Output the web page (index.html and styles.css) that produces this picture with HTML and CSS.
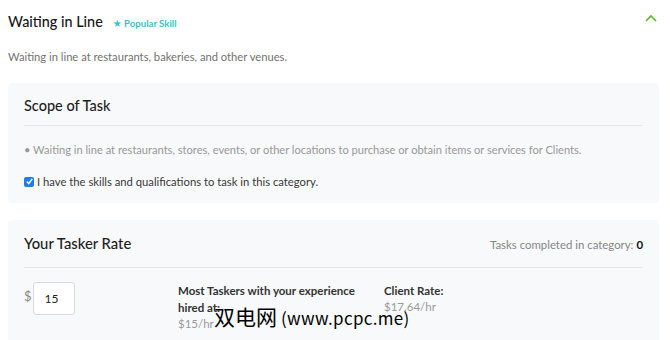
FILE: index.html
```
<!DOCTYPE html>
<html>
<head>
<meta charset="utf-8">
<link rel="stylesheet" href="styles.css">
</head>
<body>
<div class="page">
  <div class="head">
    <div class="title-row">
      <span class="title">Waiting in Line</span>
      <span class="popular"><span class="star">★</span> Popular Skill</span>
    </div>
    <svg class="chev" width="12" height="8" viewBox="0 0 12 8"><path d="M1 7 L6 2 L11 7" fill="none" stroke="#5cb82e" stroke-width="1.6"/></svg>
  </div>
  <p class="desc">Waiting in line at restaurants, bakeries, and other venues.</p>

  <section class="card scope">
    <h2 class="card-title">Scope of Task</h2>
    <div class="sep"></div>
    <p class="bullet">• Waiting in line at restaurants, stores, events, or other locations to purchase or obtain items or services for Clients.</p>
    <label class="check"><span class="box"><svg width="9" height="9" viewBox="0 0 9 9"><path d="M1.8 4.6 L3.7 6.6 L7.3 1.9" fill="none" stroke="#fff" stroke-width="1.5"/></svg></span>I have the skills and qualifications to task in this category.</label>
  </section>

  <section class="card rate">
    <div class="rate-head">
      <h2 class="card-title">Your Tasker Rate</h2>
      <span class="completed">Tasks completed in category: <b>0</b></span>
    </div>
    <div class="sep"></div>
    <div class="rate-body">
      <div class="price">
        <span class="dollar">$</span>
        <span class="input">15</span>
      </div>
      <div class="info most">
        <div class="label">Most Taskers with your experience hired at:</div>
        <div class="val">$15/hr</div>
      </div>
      <div class="info client">
        <div class="label">Client Rate:</div>
        <div class="val">$17.64/hr</div>
      </div>
    </div>
  </section>
  <div class="watermark"><span class="wm-cjk">双电网</span><span class="wm-lat">(www.pcpc.me)</span></div>
</div>
</body>
</html>
```
FILE: styles.css
```
html, body {
  margin: 0;
  padding: 0;
  background: #fff;
}
body {
  font-family: "Lato", "Liberation Sans", sans-serif;
  color: #222;
  overflow: hidden;
}
.page {
  position: relative;
  padding: 0 11px 0 8px;
  width: 651px;
}
.head {
  display: flex;
  justify-content: space-between;
  align-items: center;
  height: 42px;
}
.title-row {
  display: flex;
  align-items: baseline;
  gap: 10px;
}
.title {
  font-size: 14.4px;
  font-weight: 500;
  color: #161616;
}
.popular {
  font-size: 9.6px;
  font-weight: bold;
  color: #3dbfc4;
}
.star {
  font-family: "DejaVu Sans", sans-serif;
  font-size: 10px;
}
.chev {
  margin-right: 2px;
  margin-top: -6px;
}
.desc {
  margin: 0;
  font-size: 11.2px;
  color: #727272;
  line-height: 16px;
  padding-top: 7px;
  height: 34px;
}
.card {
  background: #f8f9fb;
  border-radius: 4px;
  padding: 0 16px;
}
.scope {
  height: 120px;
  padding-top: 13px;
  box-sizing: border-box;
  margin-bottom: 17px;
}
.card-title {
  margin: 0;
  font-size: 14.5px;
  font-weight: 500;
  color: #1e1e1e;
  line-height: 20px;
}
.sep {
  height: 1px;
  background: #e5e7ea;
  margin-top: 9px;
}
.bullet {
  margin: 16px 0 0;
  font-size: 11.1px;
  color: #989898;
  line-height: 16px;
}
.check {
  display: flex;
  align-items: center;
  margin-top: 17px;
  font-size: 11.25px;
  color: #383838;
}
.box {
  width: 10px;
  height: 10px;
  background: #1e7ee8;
  border-radius: 2px;
  margin-right: 3px;
  display: flex;
  align-items: center;
  justify-content: center;
}
.rate {
  padding-top: 13px;
  height: 130px;
  box-sizing: border-box;
}
.rate-head {
  display: flex;
  justify-content: space-between;
  align-items: baseline;
}
.rate .card-title {
  font-size: 14.8px;
}
.completed {
  font-size: 11.4px;
  color: #868686;
}
.completed b {
  color: #111;
}
.rate .sep {
  margin-top: 14px;
}
.rate-body {
  display: flex;
  padding-top: 14px;
}
.price {
  display: flex;
  align-items: flex-start;
  width: 154px;
}
.dollar {
  font-size: 13px;
  color: #888;
  margin-top: 6px;
  margin-right: 1px;
}
.input {
  width: 42px;
  height: 33px;
  box-sizing: border-box;
  background: #fff;
  border: 1px solid #d8dadd;
  border-radius: 3px;
  font-size: 12px;
  color: #222;
  padding-left: 11px;
  line-height: 31px;
}
.info .label {
  font-size: 11.5px;
  font-weight: bold;
  color: #333;
  line-height: 17px;
}
.info .val {
  font-size: 11.5px;
  color: #999;
  line-height: 16px;
}
.most {
  width: 180px;
  margin-right: 26px;
}
.watermark {
  position: absolute;
  left: 214px;
  top: 301px;
  font-family: "Noto Sans CJK SC", sans-serif;
  color: #000;
  white-space: nowrap;
}
.wm-cjk {
  font-size: 21px;
  margin-right: 4px;
}
.wm-lat {
  font-size: 17px;
  letter-spacing: 0.3px;
}
```
